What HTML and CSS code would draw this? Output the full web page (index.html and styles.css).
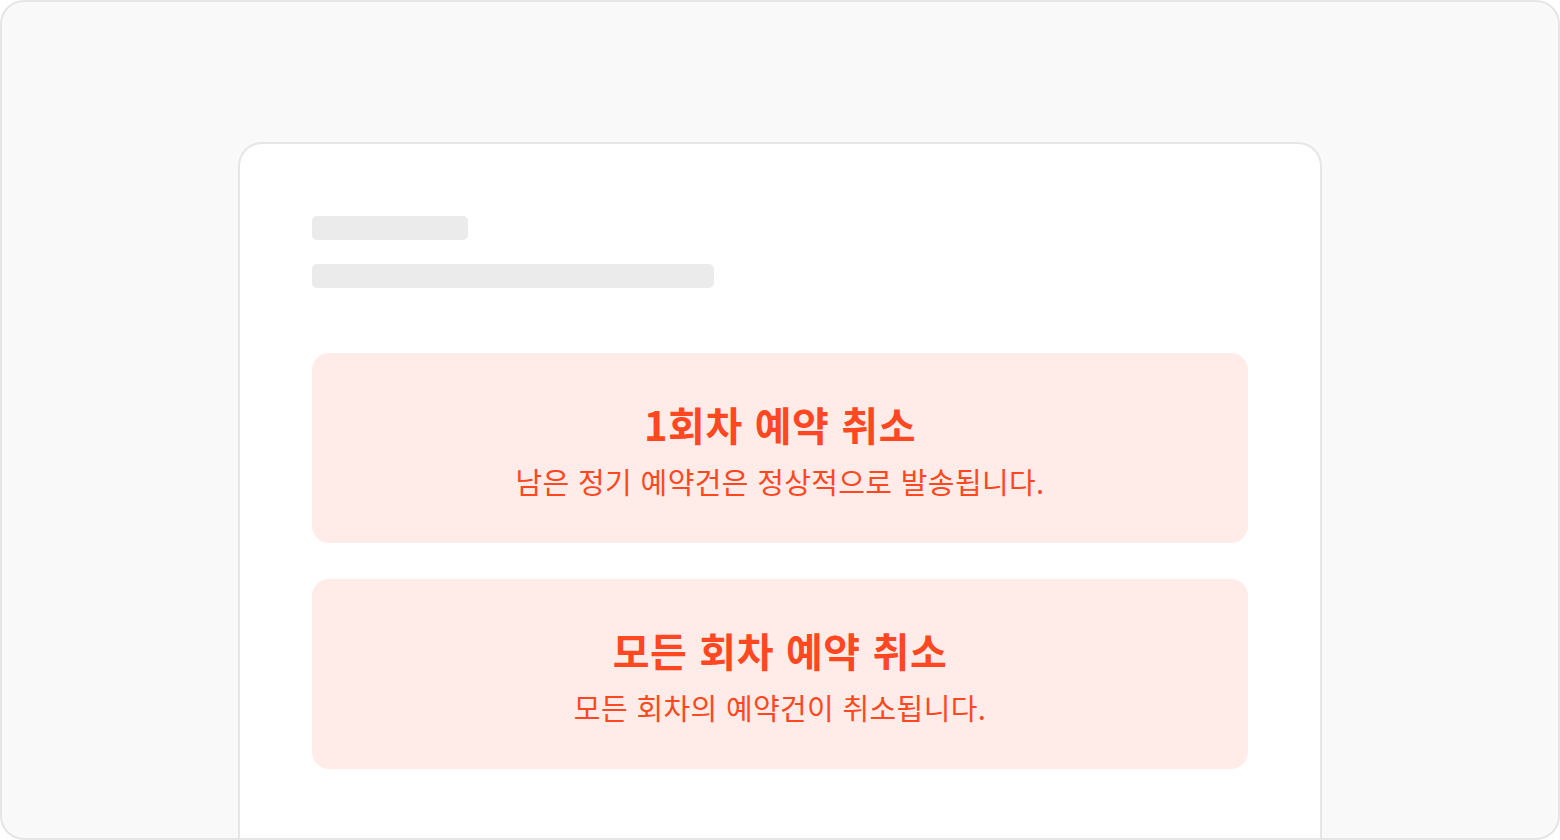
FILE: index.html
```html
<!DOCTYPE html>
<html lang="ko">
<head>
<meta charset="utf-8">
<title>예약 취소</title>
<link rel="stylesheet" href="styles.css">
</head>
<body>
<div class="frame">
  <div class="card">
    <div class="skeleton">
      <div class="bar bar-short"></div>
      <div class="bar bar-long"></div>
    </div>
    <div class="options">
      <div class="option">
        <div class="option-title">1회차 예약 취소</div>
        <div class="option-desc">남은 정기 예약건은 정상적으로 발송됩니다.</div>
      </div>
      <div class="option">
        <div class="option-title">모든 회차 예약 취소</div>
        <div class="option-desc">모든 회차의 예약건이 취소됩니다.</div>
      </div>
    </div>
  </div>
</div>
</body>
</html>
```

FILE: styles.css
```css
* { box-sizing: border-box; }
html, body { margin: 0; padding: 0; background: #ffffff; }
body { font-family: "Noto Sans CJK KR", "Noto Sans", sans-serif; }

.frame {
  width: 1560px;
  height: 840px;
  border: 2px solid #e5e5e5;
  border-radius: 24px;
  background: #f9f9f9;
  padding-top: 140px;
  padding-left: 236px;
  overflow: hidden;
}

.card {
  width: 1084px;
  height: 720px;
  background: #ffffff;
  border: 2px solid #e6e6e6;
  border-bottom: none;
  border-radius: 24px 24px 0 0;
  padding: 72px 72px 0 72px;
}

.skeleton {
  display: flex;
  flex-direction: column;
  gap: 24px;
}
.bar {
  height: 24px;
  border-radius: 5px;
  background: #ebebeb;
}
.bar-short { width: 156px; }
.bar-long { width: 402px; }

.options {
  margin-top: 65px;
  display: flex;
  flex-direction: column;
  gap: 36px;
}
.option {
  height: 190px;
  border-radius: 17px;
  background: #ffece8;
  display: flex;
  flex-direction: column;
  align-items: center;
  padding-top: 46px;
  gap: 13px;
  color: #ff4821;
}
.option-title {
  font-size: 40px;
  font-weight: 700;
  line-height: 50px;
  letter-spacing: 0.6px;
}
.option-desc {
  font-size: 29px;
  font-weight: 400;
  line-height: 38px;
  letter-spacing: 0.35px;
}
```
